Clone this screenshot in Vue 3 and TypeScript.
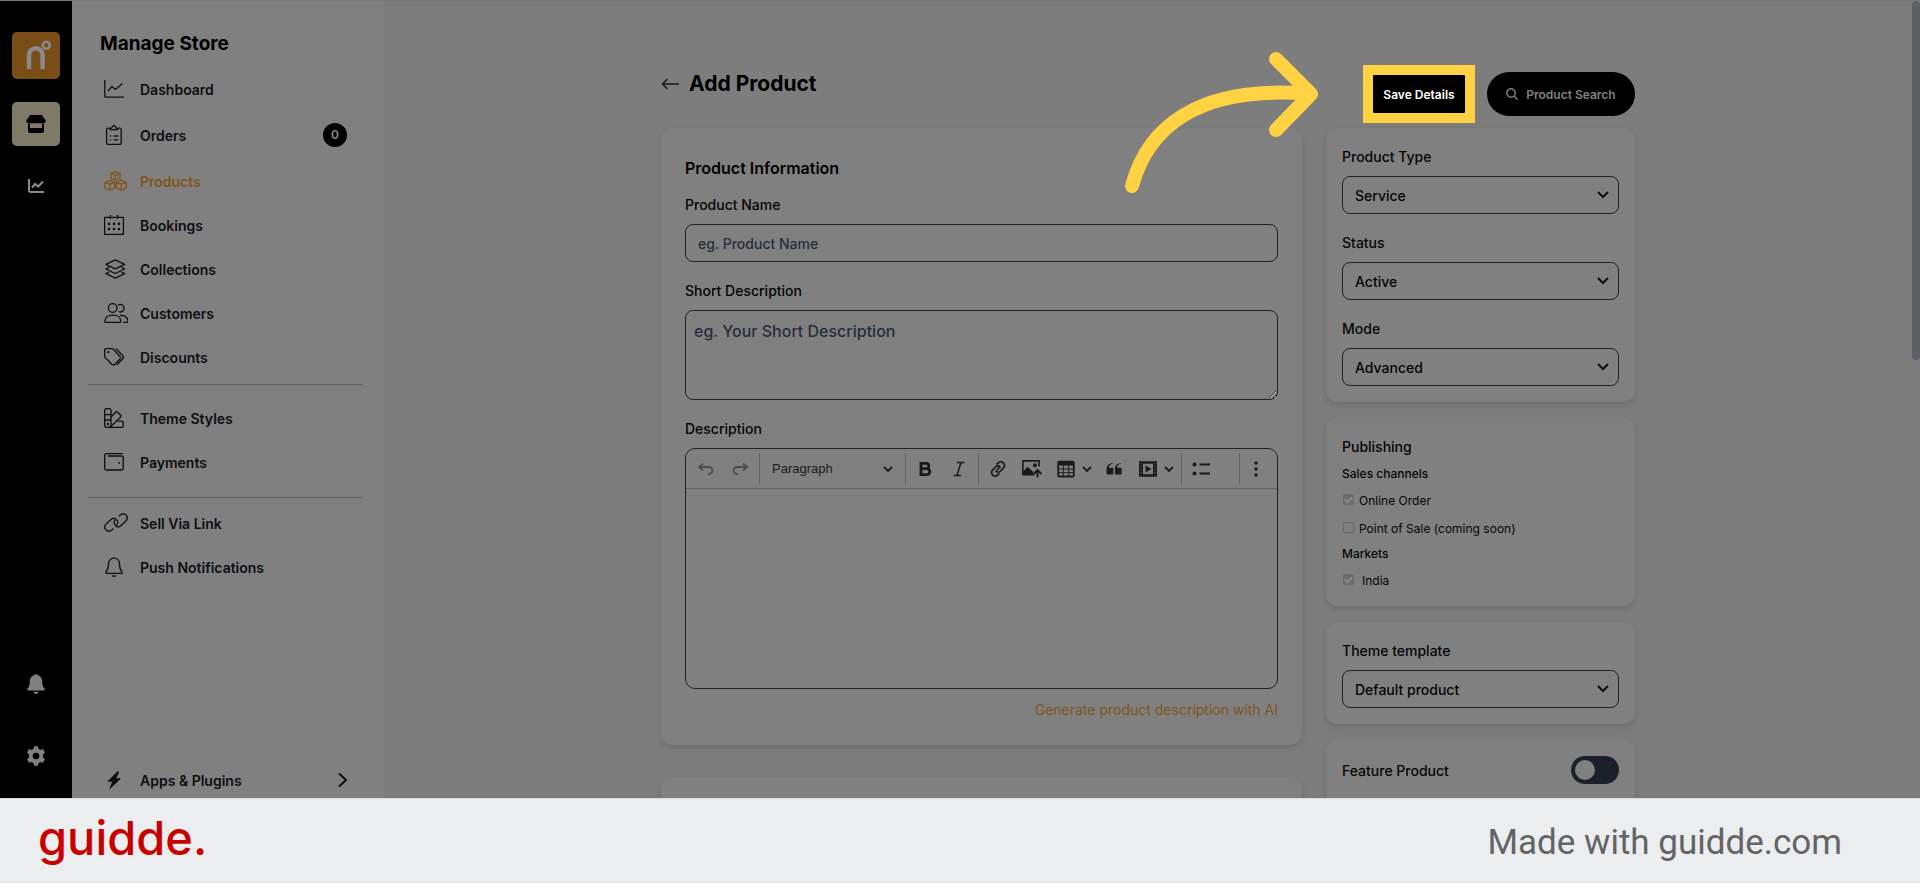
<script setup lang="ts">
import { ref } from 'vue'

interface NavItem {
  label: string
  icon: string
  active?: boolean
  count?: number
}

const icons: Record<string, string> = {
  chart: '<path d="M.8 1v16.2a1 1 0 0 0 1 1H20M4 12l4-4.6 3.400 3L18.500 4.500"/>',
  clipboard:
    '<path d="M6 3.200H4.200a1.600 1.600 0 0 0-1.600 1.600v13a1.600 1.600 0 0 0 1.600 1.600h11.400a1.600 1.600 0 0 0 1.600-1.600v-13a1.600 1.600 0 0 0-1.600-1.600H14M6 4.600c0-1 .8-1.600 1.800-1.800C8.200 1.300 9 .6 9.900.6s1.700.7 2.100 2.200c1 .2 1.900.8 1.900 1.800zM9.500 11h4.800M9.500 14.800h4.800M5.800 11h1.400M5.800 14.800h1.400"/>',
  boxes:
    '<path d="M11.500.6 16 2.300v5L11.500 9.200 7 7.300v-5zM7 2.300l4.500 1.900L16 2.300M11.500 4.200v5M5.800 9.400l5 1.900v5.500l-5 2.300-5-2.300v-5.500zM.8 11.300l5 1.900 5-1.900M5.800 13.200v5.900M17.200 9.400l5 1.900v5.500l-5 2.300-5-2.300v-5.500zM12.200 11.300l5 1.900 5-1.900M17.200 13.200v5.900"/>',
  calendar:
    '<path d="M.6 2.300h18.800v17.100H.6zM6.500 0v4M13.500 0v4"/><path stroke-width="2.600" stroke-linecap="round" d="M5 8.900h.01M10 8.900h.01M15 8.900h.01M5 14h.01M10 14h.01M15 14h.01"/>',
  layers:
    '<path d="M11.300.8 20.700 5.300l-9.400 4.500-9.400-4.500zM5.200 8.300 1.900 10l9.400 4.500L20.700 10l-3.300-1.700M5.200 13 1.900 14.700l9.400 4.500 9.400-4.500-3.300-1.700"/>',
  people:
    '<circle cx="8.700" cy="5" r="4.300"/><path d="M.8 18.200c0-3.700 3.100-6 8-6s8 2.300 8 6c0 .9-.5 1.300-1.200 1.300H2c-.7 0-1.200-.4-1.200-1.300zM14 2.300a3.700 3.700 0 1 1 .6 6.200M16 12.400c4.500-.3 8 1.900 8 5.800 0 .9-.4 1.300-1.100 1.300h-3.700"/>',
  tags:
    '<path d="M.7 3v6.200c0 .6.2 1 .6 1.400l6.500 6.600c1 1 2.300 1 3.200 0l4.800-4.900c.9-.9.900-2.200 0-3.100L9.400 2.300C9 1.900 8.500 1.700 8 1.700H2A1.300 1.300 0 0 0 .7 3zM12 1.700l6.800 7c.9.900.9 2.200 0 3.100l-5.900 6"/><circle cx="4.300" cy="5.200" r=".5"/>',
  swatches:
    '<rect x=".7" y=".7" width="6.300" height="18.600" rx="1.600"/><path d="M.7 6.600H7M.7 12H7M7 9l4.500-4.700c.6-.6 1.500-.6 2.100 0L16.500 7c.6.6.6 1.500 0 2.100L6 19.300M13.500 13.200h4.300c.9 0 1.500.6 1.500 1.500v3c0 .9-.6 1.600-1.500 1.600H4"/><circle cx="3.900" cy="16" r=".5"/>',
  wallet:
    '<path d="M18.800 1.600H2.500C1.400 1.600.7 2.300.7 3.400v12.800c0 1.100.7 1.800 1.800 1.800h15c1.100 0 1.800-.7 1.800-1.800V5.700c0-1-.7-1.700-1.800-1.700H4"/><path stroke-width="1.800" d="M14.200 10.800h1.600"/>',
  link:
    '<path d="M9.600 15.400 7.700 17c-2 1.600-4.300 1.400-5.800-.2-1.600-1.800-1.400-4.200.4-5.900l4.500-4.200c1.900-1.700 4.200-1.700 5.700-.1 1.400 1.600 1.500 4 .2 5.500M14.800 3.200l1.200-1c2-1.700 4.600-1.600 6.100.1 1.600 1.800 1.400 4.200-.5 5.900l-4.500 4.200c-1.900 1.700-4.200 1.700-5.700.1-1.400-1.600-1.500-4-.2-5.500"/>',
  bell:
    '<path d="M10 1.200c3.500 0 5.500 2.600 5.500 5.800 0 4.300.8 6.100 2.500 7.900.5.600.1 1.500-.7 1.500H2.700c-.8 0-1.200-.9-.7-1.500 1.700-1.800 2.500-3.600 2.500-7.900 0-3.200 2-5.800 5.500-5.800zM10 .3v.9M8 18.500c.5 1 3.500 1 4 0"/>',
}

const groups: NavItem[][] = [
  [
    { label: 'Dashboard', icon: 'chart' },
    { label: 'Orders', icon: 'clipboard', count: 0 },
    { label: 'Products', icon: 'boxes', active: true },
    { label: 'Bookings', icon: 'calendar' },
    { label: 'Collections', icon: 'layers' },
    { label: 'Customers', icon: 'people' },
    { label: 'Discounts', icon: 'tags' },
  ],
  [
    { label: 'Theme Styles', icon: 'swatches' },
    { label: 'Payments', icon: 'wallet' },
  ],
  [
    { label: 'Sell Via Link', icon: 'link' },
    { label: 'Push Notifications', icon: 'bell' },
  ],
]

const selects = [
  { id: 'product-type', label: 'Product Type', value: 'Service' },
  { id: 'status', label: 'Status', value: 'Active' },
  { id: 'mode', label: 'Mode', value: 'Advanced' },
]

const productName = ref('')
const shortDescription = ref('')
const featured = ref(false)
</script>

<template>
  <div class="page">
    <div class="stage">
      <nav class="rail" aria-label="Workspace">
        <a href="#" class="brand" aria-label="Home">
          <svg viewBox="0 0 47 47" width="47" height="47" fill="none" stroke="#8a8a8a">
            <path d="M17 37V23a6.800 6.800 0 0 1 13.600 0v14" stroke-width="4.500" />
            <circle cx="34.300" cy="13.300" r="3.500" stroke-width="2.600" />
          </svg>
        </a>
        <a href="#" class="rail-store" aria-label="Store">
          <svg viewBox="0 0 20 20" width="20" height="20" fill="#000">
            <path d="M4 1h12l1.200 2.300L19.600 6v1.500c0 1-.8 1.700-2.400 1.700H2.800C1.200 9.200.4 8.500.4 7.500V6l2.400-2.700z" />
            <path d="M2 9.500h2V14h12V9.500h2V17a2 2 0 0 1-2 2H4a2 2 0 0 1-2-2z" />
          </svg>
        </a>
        <a href="#" class="rail-link" aria-label="Analytics">
          <svg viewBox="0 0 16 16" width="16" height="16" fill="none" stroke="#8a8a8a" stroke-width="2">
            <path d="M1 1v11.500a1.500 1.500 0 0 0 1.500 1.500H16" />
            <path d="M4 9.500 7.200 6l3 2.500L15 3.500" stroke-width="2.200" />
          </svg>
        </a>
        <a href="#" class="rail-link push" aria-label="Notifications">
          <svg viewBox="0 0 20 20" width="20" height="20" fill="#808080">
            <path d="M10 0c.7 0 1 .5 1 1.100 3 .5 5.200 3 5.200 6.200 0 3.800.7 5.500 2.300 7.300.7.900.2 2-.9 2H2.400c-1.100 0-1.600-1.100-.9-2C3.100 12.800 3.800 11.100 3.800 7.300 3.800 4.100 6 1.600 9 1.100 9 .5 9.300 0 10 0zM7.500 17.800h5c-.3 1.300-1.300 2.200-2.500 2.200s-2.200-.9-2.500-2.200z" />
          </svg>
        </a>
        <a href="#" class="rail-link" aria-label="Settings">
          <svg viewBox="0 0 20 20" width="20" height="20" fill="#808080">
            <path fill-rule="evenodd" d="M8 .3h4l.6 2.600 1.700 1 2.600-.8 2.100 3.500-2 1.900v2.900l2 1.900-2.100 3.500-2.600-.8-1.700 1-.6 2.700H8L7.400 17l-1.700-1-2.600.8L1 13.300l2-1.900V8.500L1 6.600l2.100-3.500 2.600.8 1.700-1zM10 6.700a3.300 3.300 0 1 0 0 6.600 3.300 3.300 0 0 0 0-6.600z" />
          </svg>
        </a>
      </nav>

      <aside class="sidebar">
        <h2>Manage Store</h2>
        <ul v-for="(group, g) in groups" :key="g" class="group">
          <li v-for="item in group" :key="item.label">
            <a href="#" class="nav-item" :class="{ active: item.active, counted: item.count !== undefined }">
              <svg class="nav-icon" viewBox="0 0 24 20" width="24" height="20" fill="none" stroke="currentColor" stroke-width="1.300" stroke-linejoin="round" v-html="icons[item.icon]" />
              <span>{{ item.label }}</span>
              <span v-if="item.count !== undefined" class="badge">{{ item.count }}</span>
            </a>
          </li>
        </ul>
        <a href="#" class="nav-item apps">
          <svg class="nav-icon" viewBox="0 0 24 20" width="24" height="20" fill="currentColor">
            <path d="M14 1.500 4.200 11.200h4.700L5.800 18.500 16.200 8.800h-4.700L14.600 2z" stroke="currentColor" stroke-linejoin="round" />
          </svg>
          <span>Apps &amp; Plugins</span>
          <svg class="chevron-right" viewBox="0 0 10 16" width="10" height="16" fill="none" stroke="currentColor" stroke-width="2">
            <path d="m2 1.500 7 6.500-7 6.500" />
          </svg>
        </a>
      </aside>

      <main class="main">
        <div class="content">
          <header class="head">
            <div class="title">
              <a href="#" aria-label="Back">
                <svg viewBox="0 0 18 12" width="18" height="12" fill="none" stroke="#1a1a1a" stroke-width="1.600">
                  <path d="M6.500 1 1.500 6l5 5M1.500 6H18" />
                </svg>
              </a>
              <h1>Add Product</h1>
            </div>
            <div class="actions">
              <div class="save-wrap">
                <button type="button" class="pill save">Save Details</button>
                <span class="highlight"></span>
                <svg class="pointer" viewBox="1120 48 203 150" width="203" height="150" fill="none" stroke="#ffd243" stroke-width="14" stroke-linecap="round" stroke-linejoin="round">
                  <path d="M1132 186C1147 130 1195 84 1311 94M1276 59l35 35-35 36" />
                </svg>
              </div>
              <button type="button" class="pill search">
                <svg viewBox="0 0 12 12" width="12" height="12" fill="none" stroke="currentColor" stroke-width="1.400">
                  <circle cx="5" cy="5" r="4.200" />
                  <path d="m8 8 3.700 3.700" />
                </svg>
                Product Search
              </button>
            </div>
          </header>

          <div class="columns">
            <div class="left">
              <section class="card info">
                <h3>Product Information</h3>
                <div class="field">
                  <label for="product-name">Product Name</label>
                  <input id="product-name" v-model="productName" type="text" placeholder="eg. Product Name" />
                </div>
                <div class="field">
                  <label for="short-description">Short Description</label>
                  <textarea id="short-description" v-model="shortDescription" placeholder="eg. Your Short Description"></textarea>
                </div>
                <div class="field">
                  <label id="description-label">Description</label>
                  <div class="editor">
                    <div class="toolbar" role="toolbar" aria-label="Editor toolbar">
                      <button type="button" class="tool faded" aria-label="Undo">
                        <svg viewBox="0 0 18 14" width="18" height="14"><path d="M6 1.500 2 5l4 3.500M2 5h10a3.500 3.500 0 0 1 0 7h-1" /></svg>
                      </button>
                      <button type="button" class="tool faded" aria-label="Redo">
                        <svg viewBox="0 0 18 14" width="18" height="14"><path d="M12 1.500 16 5l-4 3.500M16 5H6a3.500 3.500 0 0 0 0 7h1" /></svg>
                      </button>
                      <span class="sep"></span>
                      <button type="button" class="tool heading">
                        Paragraph
                        <svg viewBox="0 0 10 10" width="10" height="10"><path d="m1 3 4 4 4-4" /></svg>
                      </button>
                      <span class="sep"></span>
                      <button type="button" class="tool" aria-label="Bold">
                        <svg viewBox="0 0 14 16" width="14" height="16"><path stroke-width="2.800" d="M3 2.300h5.200a2.700 2.700 0 0 1 0 5.400H3zM3 7.700h5.800a3 3 0 0 1 0 6H3zM3 1v14" /></svg>
                      </button>
                      <button type="button" class="tool" aria-label="Italic">
                        <svg viewBox="0 0 12 16" width="12" height="16"><path stroke-width="1.500" d="M4 1.500h7.500M.5 14.500H8M8 1.500l-4 13" /></svg>
                      </button>
                      <span class="sep"></span>
                      <button type="button" class="tool" aria-label="Link">
                        <svg viewBox="0 0 16 16" width="16" height="16"><path stroke-width="1.700" d="M6.500 3.500 8.300 1.900c1.600-1.400 3.700-1.300 5 0 1.400 1.400 1.500 3.500.2 5L10.500 10c-1.300 1.300-3 1.400-4.300.4M9.500 12.500l-1.800 1.700c-1.600 1.300-3.600 1.200-5-.1-1.300-1.400-1.400-3.500-.2-5L5.500 6c1.300-1.300 3-1.400 4.300-.4M5.500 10.500l5-5" /></svg>
                      </button>
                      <button type="button" class="tool" aria-label="Insert image">
                        <svg viewBox="0 0 20 18" width="20" height="18">
                          <path stroke-width="1.600" d="M12 14.700H.9V.9h16.200v5.500" />
                          <path class="solid" d="M1 15v-3.500l4.500-4.800L11 11.500v3.500zM13 3.200a2.100 2.100 0 1 1 0 4.200 2.100 2.100 0 0 1 0-4.200z" />
                          <path stroke-width="2" d="M15.500 17.500v-7M11.700 14l3.800-4 3.800 4" />
                        </svg>
                      </button>
                      <button type="button" class="tool split" aria-label="Insert table">
                        <svg viewBox="0 0 20 18" width="20" height="18">
                          <rect x="2.200" y="1.700" width="15.600" height="14.800" rx="1" />
                          <path class="solid" d="M2 1.500h16v4H2z" />
                          <path stroke-width="1" d="M2 9h16M2 12.700h16M7.300 5v12M12.700 5v12" />
                        </svg>
                        <svg viewBox="0 0 10 10" width="10" height="10"><path d="m1 3 4 4 4-4" /></svg>
                      </button>
                      <button type="button" class="tool" aria-label="Block quote">
                        <svg viewBox="0 0 16 12" width="16" height="12">
                          <path class="solid" d="M7 .5C4 1 2.800 3 2.800 4.700H6.500c.5 0 .8.3.8.8v5.200c0 .5-.3.8-.8.8H1.400c-.5 0-.8-.3-.8-.8V6C.6 2.500 3 .2 7 .2zM15.300.5c-3 .5-4.200 2.500-4.200 4.200h3.700c.5 0 .8.3.8.8v5.200c0 .5-.3.8-.8.8H9.700c-.5 0-.8-.3-.8-.8V6c0-3.500 2.400-5.800 6.400-5.800z" />
                        </svg>
                      </button>
                      <button type="button" class="tool split" aria-label="Insert media">
                        <svg viewBox="0 0 20 18" width="20" height="18">
                          <path class="solid" fill-rule="evenodd" d="M1 1.300h18v15.400H1zM5 3.700v10.600h10V3.700z" />
                          <path stroke="#6a6a6a" stroke-width="1" stroke-dasharray="1.500 1.500" d="M3 3v12.500M17 3v12.500" />
                          <path class="solid" d="m7.500 5.500 6 3.500-6 3.500z" />
                        </svg>
                        <svg viewBox="0 0 10 10" width="10" height="10"><path d="m1 3 4 4 4-4" /></svg>
                      </button>
                      <span class="sep"></span>
                      <button type="button" class="tool" aria-label="Bulleted list">
                        <svg viewBox="0 0 18 14" width="18" height="14"><path d="M7.500 2.500H18M7.500 11.500H18" /><circle class="solid" cx="2.500" cy="2.500" r="2" /><circle class="solid" cx="2.500" cy="11.500" r="2" /></svg>
                      </button>
                      <span class="sep end"></span>
                      <button type="button" class="tool more" aria-label="Show more items">
                        <svg viewBox="0 0 4 16" width="4" height="16"><circle class="solid" cx="2" cy="2" r="1.700" /><circle class="solid" cx="2" cy="8" r="1.700" /><circle class="solid" cx="2" cy="14" r="1.700" /></svg>
                      </button>
                    </div>
                    <div class="editable" contenteditable="true" role="textbox" aria-labelledby="description-label"></div>
                  </div>
                </div>
                <a href="#" class="generate">Generate product description with AI</a>
              </section>
              <section class="card next"></section>
            </div>

            <div class="right">
              <section class="card side">
                <div v-for="s in selects" :key="s.id" class="field">
                  <label :for="s.id">{{ s.label }}</label>
                  <div class="select">
                    <select :id="s.id"><option>{{ s.value }}</option></select>
                    <svg viewBox="0 0 12 8" width="12" height="8"><path d="m1 1 5 5 5-5" /></svg>
                  </div>
                </div>
              </section>

              <section class="card side publishing">
                <h4>Publishing</h4>
                <h5>Sales channels</h5>
                <label class="check"><input type="checkbox" checked disabled />Online Order</label>
                <label class="check spaced"><input type="checkbox" disabled />Point of Sale (coming soon)</label>
                <h5>Markets</h5>
                <label class="check wide"><input type="checkbox" checked disabled />India</label>
              </section>

              <section class="card side">
                <div class="field">
                  <label for="theme-template">Theme template</label>
                  <div class="select">
                    <select id="theme-template"><option>Default product</option></select>
                    <svg viewBox="0 0 12 8" width="12" height="8"><path d="m1 1 5 5 5-5" /></svg>
                  </div>
                </div>
              </section>

              <section class="card side feature">
                <label for="feature">Feature Product</label>
                <input id="feature" v-model="featured" type="checkbox" role="switch" class="switch" />
              </section>
            </div>
          </div>
        </div>
        <div class="scrollbar"></div>
      </main>
    </div>

    <footer class="footer">
      <span class="logo">guidde.</span>
      <span class="made">Made with guidde.com</span>
    </footer>
  </div>
</template>

<style>
body {
  margin: 0;
}
</style>

<style scoped>
.page,
.page * {
  box-sizing: border-box;
}
.page {
  height: 100vh;
  display: flex;
  flex-direction: column;
  font-family: Inter, 'Liberation Sans', sans-serif;
  font-size: 14px;
  color: #050505;
  background: #7d7d7d;
}
h1, h2, h3, h4, h5, ul {
  margin: 0;
  padding: 0;
}
ul {
  list-style: none;
}
a {
  color: inherit;
  text-decoration: none;
}
button, input, select, textarea {
  font-family: inherit;
}
svg {
  display: block;
  flex: none;
}
.stage {
  flex: 1;
  min-height: 0;
  display: flex;
  overflow: hidden;
  border-top: 1px solid #777;
}
.rail {
  width: 72px;
  flex: none;
  background: #000;
  display: flex;
  flex-direction: column;
  align-items: center;
  padding: 31px 0 30px;
}
.brand {
  width: 48px;
  height: 47px;
  border-radius: 5px;
  background: #794e16;
}
.rail-store {
  width: 48px;
  height: 44px;
  margin: 23px 0 30px;
  border-radius: 5px;
  background: #7f7a69;
  display: grid;
  place-items: center;
}
.rail-link {
  padding: 2px;
}
.rail-link.push {
  margin: auto 0 48px;
}
.sidebar {
  width: 312px;
  flex: none;
  display: flex;
  flex-direction: column;
  padding: 31px 21px 0 16px;
  background: #808080;
}
.sidebar h2 {
  font-size: 19px;
  line-height: 24px;
  font-weight: 700;
  padding-left: 12px;
  margin-bottom: 11px;
  color: #000;
}
.group {
  flex: none;
}
.group + .group {
  border-top: 1px solid #5f6266;
  margin-top: 5px;
  padding-top: 11px;
}
.group + .group + .group {
  margin-top: 13px;
  padding-top: 3px;
}
.nav-item {
  height: 44px;
  display: flex;
  align-items: center;
  gap: 12px;
  padding: 0 16px;
  font-weight: 600;
  color: #0c0e12;
}
.nav-item.counted {
  height: 48px;
}
.nav-item.active {
  color: #80541b;
}
.badge {
  margin-left: auto;
  width: 24px;
  height: 24px;
  border-radius: 12px;
  background: #000;
  color: #8a8a8a;
  font-size: 12px;
  line-height: 24px;
  text-align: center;
}
.apps {
  flex: none;
  margin-top: auto;
  margin-bottom: -4px;
}
.chevron-right {
  margin-left: auto;
}
.main {
  flex: 1;
  min-width: 0;
  position: relative;
  padding: 71px 32px 0 24px;
  background: #7d7d7d;
}
.content {
  max-width: 974px;
  margin: 0 auto;
}
.head {
  display: flex;
  justify-content: space-between;
  align-items: flex-start;
  height: 44px;
  margin-bottom: 12px;
}
.title {
  display: flex;
  align-items: center;
  gap: 10px;
}
h1 {
  font-size: 21px;
  line-height: 24px;
  font-weight: 700;
  color: #000;
}
.actions {
  display: flex;
  gap: 12px;
}
.pill {
  height: 44px;
  border: 0;
  border-radius: 22px;
  background: #000;
  font-size: 12px;
  font-weight: 600;
}
.save-wrap {
  position: relative;
}
.save {
  width: 112px;
  color: #fff;
}
.highlight {
  position: absolute;
  inset: -7px 0;
  border: 10px solid #ffd243;
}
.pointer {
  position: absolute;
  top: -24px;
  right: calc(100% + 40px);
}
.search {
  width: 148px;
  display: flex;
  align-items: center;
  justify-content: center;
  gap: 8px;
  padding: 0;
  color: #808080;
}
.columns {
  display: grid;
  grid-template-columns: minmax(0, 641fr) minmax(0, 309fr);
  gap: 24px;
}
.card {
  border-radius: 12px;
  background: #808080;
  box-shadow: 0 3px 6px rgba(0, 0, 0, 0.13);
}
.left {
  display: flex;
  flex-direction: column;
  gap: 32px;
}
.right {
  display: flex;
  flex-direction: column;
  gap: 16px;
}
.info {
  padding: 24px;
}
.info h3 {
  font-size: 16px;
  line-height: 32px;
  font-weight: 600;
  margin-bottom: 8px;
  color: #000;
}
.next {
  height: 120px;
}
.side {
  padding: 16px;
}
.field + .field {
  margin-top: 16px;
}
.field > label {
  display: block;
  line-height: 26px;
  margin-bottom: 6px;
  font-weight: 500;
}
.field > input,
.field > textarea,
.select select {
  display: block;
  width: 100%;
  height: 38px;
  border: 1px solid #1b202b;
  border-radius: 8px;
  padding: 0 12px;
  background: transparent;
  font-size: 14px;
  font-weight: 500;
  color: #050505;
  outline: 0;
}
.field > textarea {
  height: 90px;
  padding: 8px;
  font-size: 16px;
  line-height: 24px;
}
.field > input::placeholder,
.field > textarea::placeholder {
  color: #272d38;
  opacity: 1;
}
.select {
  display: grid;
  align-items: center;
}
.select > * {
  grid-area: 1 / 1;
}
.select select {
  appearance: none;
}
.select svg {
  justify-self: end;
  margin-right: 10px;
  pointer-events: none;
  fill: none;
  stroke: #0c0c0c;
  stroke-width: 2;
}
.editor {
  border: 1px solid #1b202b;
  border-radius: 10px;
  overflow: hidden;
}
.toolbar {
  display: flex;
  align-items: center;
  height: 40px;
  padding: 0 7px 0 3px;
  border-bottom: 1px solid #636363;
}
.tool {
  width: 34px;
  height: 34px;
  flex: none;
  display: flex;
  align-items: center;
  justify-content: center;
  border: 0;
  padding: 0;
  background: none;
  color: #1a1a1a;
}
.tool svg {
  fill: none;
  stroke: currentColor;
  stroke-width: 1.8;
}
.tool .solid {
  fill: currentColor;
  stroke: none;
}
.tool.faded {
  color: #4d4d4d;
}
.tool.heading {
  width: 141px;
  justify-content: space-between;
  padding: 0 10px;
  font-family: 'Liberation Sans', Arial, sans-serif;
  font-size: 13px;
}
.tool.split {
  width: 48px;
  justify-content: flex-start;
  gap: 6px;
  padding-left: 7px;
}
.tool.more {
  width: 28px;
}
.sep {
  width: 1px;
  height: 31px;
  flex: none;
  margin: 0 2px;
  background: #636363;
}
.sep.end {
  margin-left: auto;
}
.editable {
  height: 199px;
  outline: 0;
}
.generate {
  display: block;
  width: fit-content;
  margin: 10px 0 0 auto;
  line-height: 22px;
  color: #80541b;
}
.publishing {
  padding-bottom: 14px;
}
h4 {
  font-size: 14px;
  line-height: 26px;
  font-weight: 500;
}
h5 {
  font-size: 12px;
  line-height: 28px;
  font-weight: 500;
}
.check {
  display: flex;
  align-items: center;
  gap: 5px;
  height: 24px;
  font-size: 12px;
}
.check.spaced {
  margin-top: 4px;
}
.check.wide {
  gap: 8px;
}
.check input {
  appearance: none;
  width: 11px;
  height: 11px;
  margin: 0 0 2px 1px;
  border: 1px solid #646464;
  border-radius: 2px;
  display: grid;
  place-items: center;
}
.check input:checked {
  border-color: #6b6b6b;
  background: #6b6b6b;
}
.check input:checked::before {
  content: '';
  width: 3px;
  height: 6px;
  margin-bottom: 2px;
  border: solid #8a8a8a;
  border-width: 0 2px 2px 0;
  transform: rotate(45deg);
}
.feature {
  display: flex;
  justify-content: space-between;
  align-items: flex-start;
  height: 120px;
  line-height: 30px;
  font-weight: 500;
}
.switch {
  appearance: none;
  width: 48px;
  height: 28px;
  margin: 0;
  padding: 4px;
  border-radius: 14px;
  background: #1b202b;
}
.switch::before {
  content: '';
  display: block;
  width: 20px;
  height: 20px;
  border-radius: 10px;
  background: #808080;
}
.switch:checked::before {
  margin-left: auto;
}
.scrollbar {
  position: absolute;
  top: 0;
  right: 0;
  width: 8px;
  height: 45%;
  border-radius: 4px;
  background: #5b6067;
}
.footer {
  height: 85px;
  flex: none;
  display: flex;
  align-items: center;
  justify-content: space-between;
  padding: 0 78px 0 38px;
  border-top: 1px solid #d9dadb;
  border-bottom: 1px solid #dddee0;
  background: #ecedef;
}
.logo {
  font-size: 47px;
  line-height: 56px;
  font-weight: 500;
  padding-bottom: 6px;
  color: #c80000;
}
.made {
  font-family: Roboto, sans-serif;
  font-size: 35px;
  line-height: 40px;
  padding-top: 4px;
  color: #626466;
}
</style>
